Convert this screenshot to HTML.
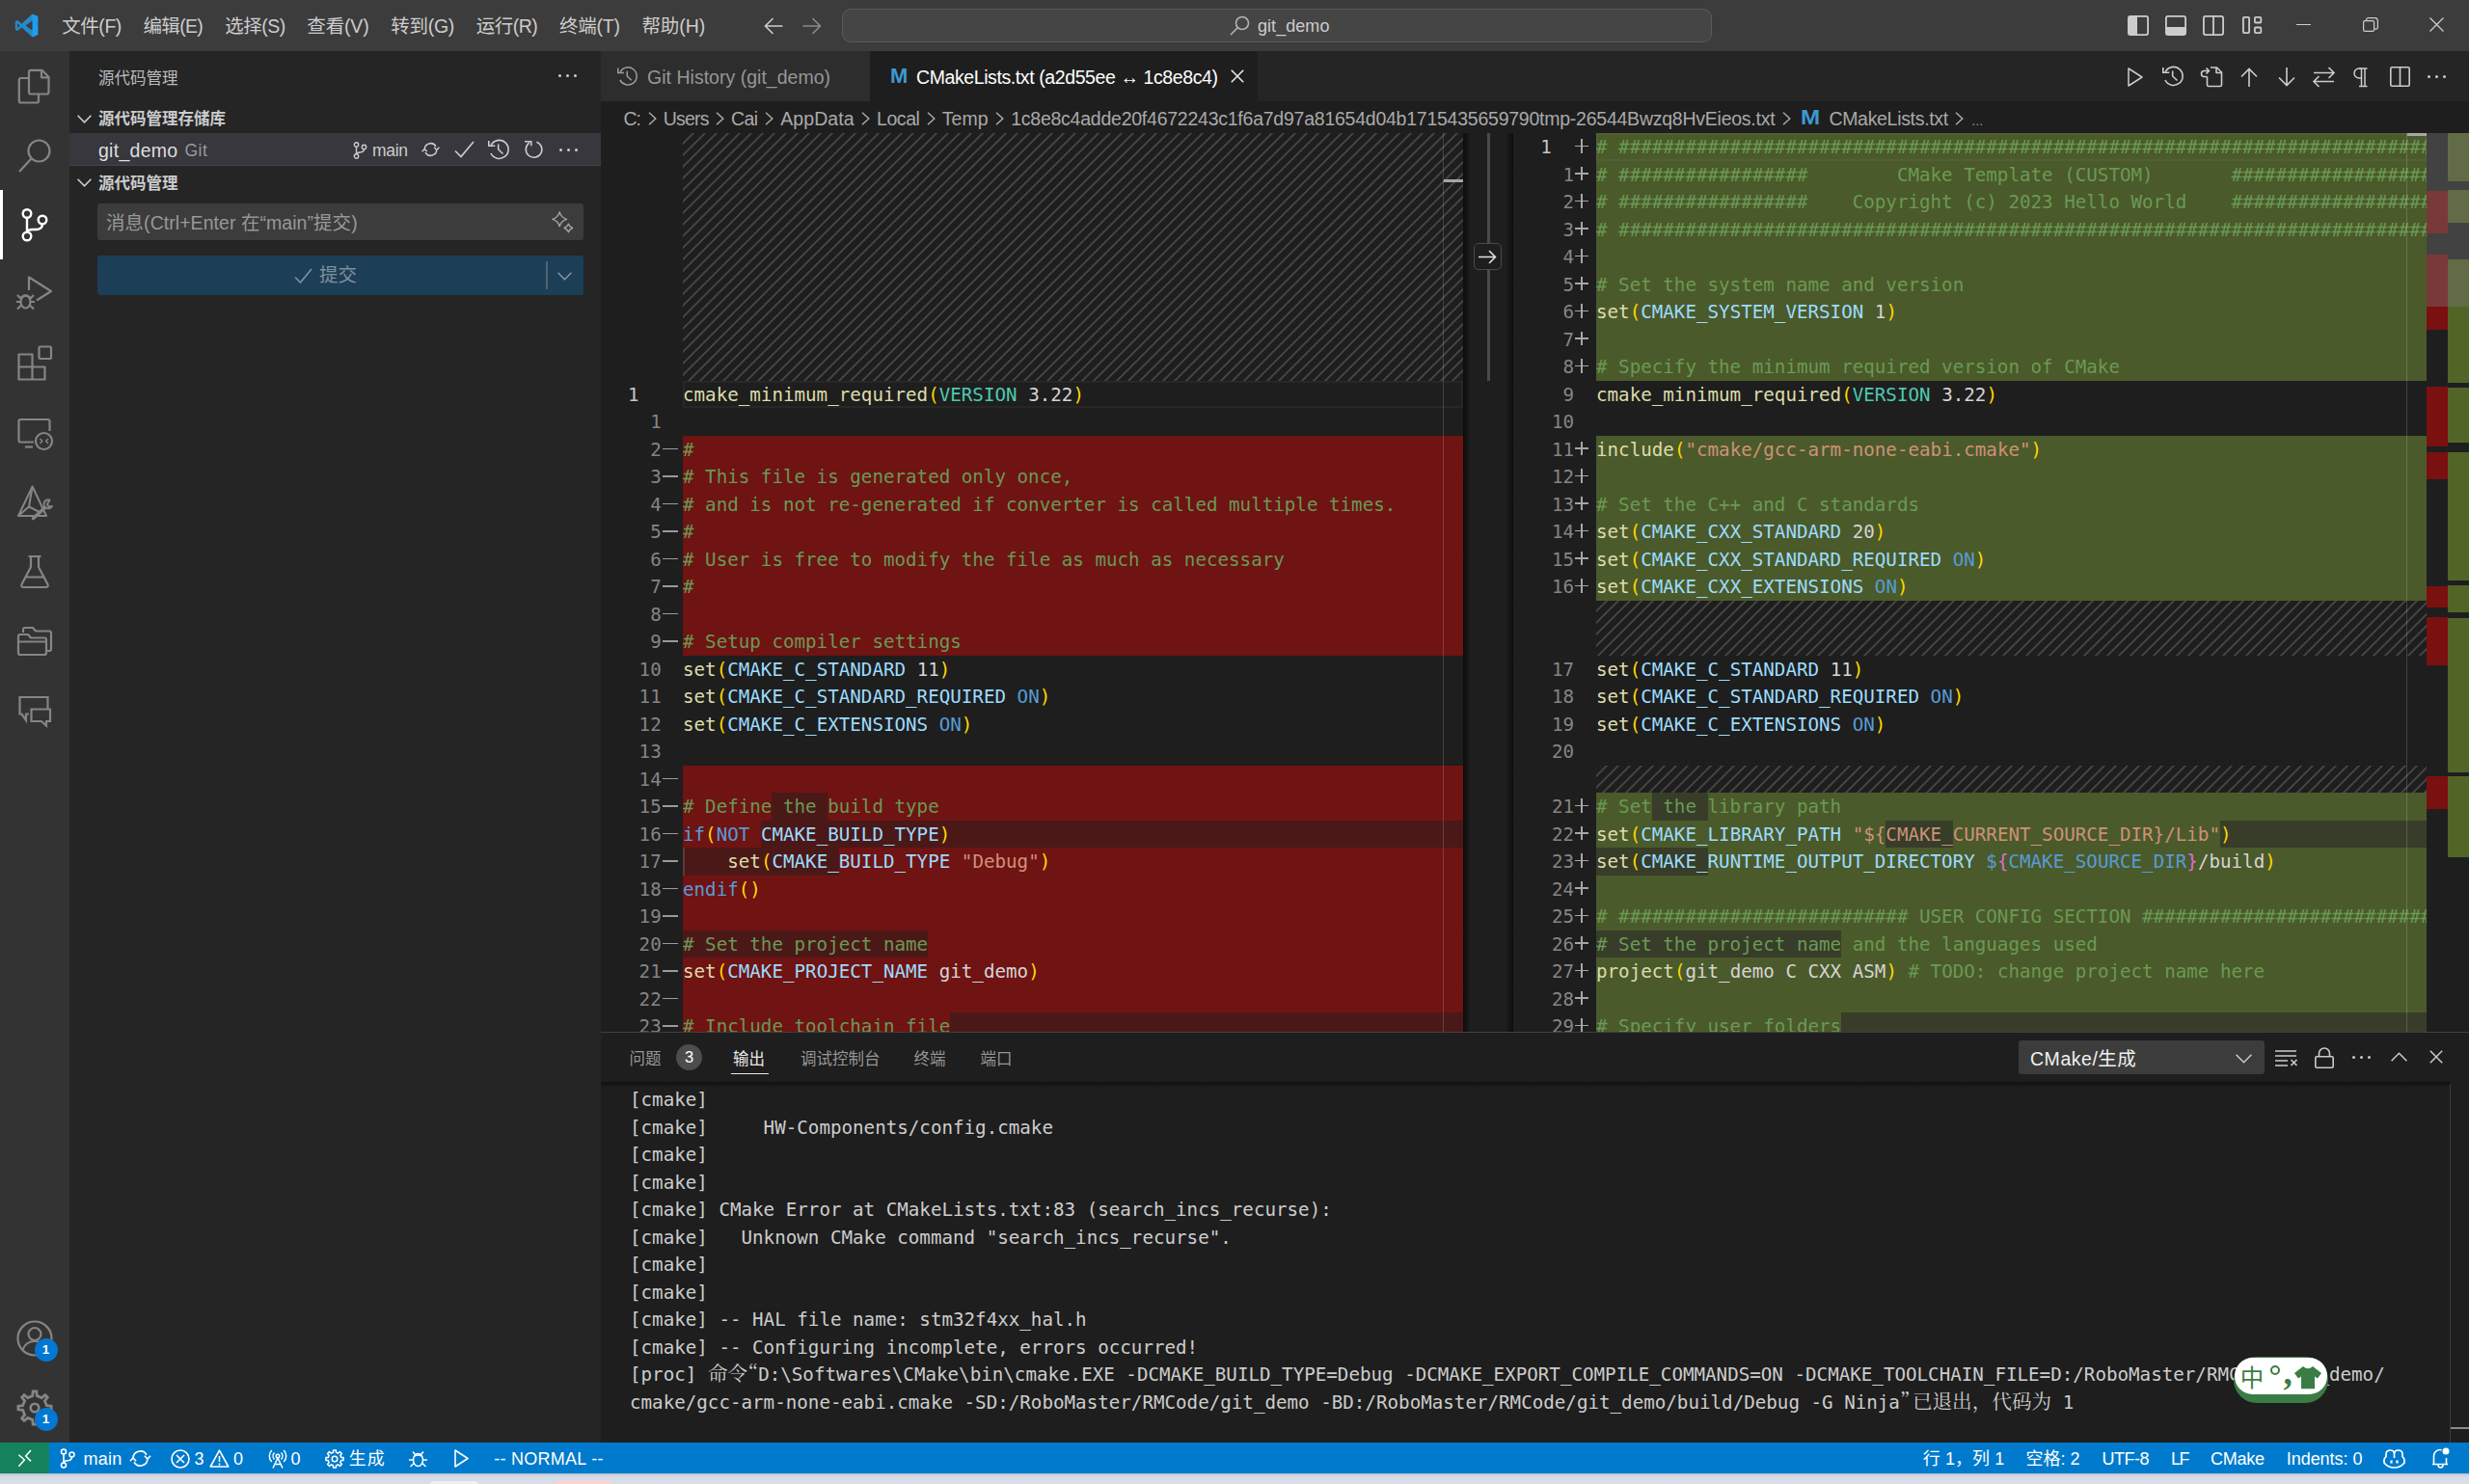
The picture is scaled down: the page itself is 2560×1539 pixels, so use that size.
<!DOCTYPE html>
<html lang="zh-CN"><head><meta charset="utf-8"><title>git_demo</title>
<style>
*{box-sizing:border-box;margin:0;padding:0}
html,body{width:2560px;height:1539px;overflow:hidden;background:#1e1e1e}
body{position:relative;font-family:"Liberation Sans","Noto Sans CJK SC",sans-serif;color:#ccc;font-size:19.5px}
.abs,#title,#act,#side,#tabs,#crumbs,.ed,#ruler,#panel,#status,#below,#gutter{position:absolute}
svg{display:block;position:absolute;overflow:visible}
/* title bar */
#title{left:0;top:0;width:2560px;height:52.5px;background:#3c3c3c}
#title .mi{position:absolute;top:1px;height:52.5px;line-height:52.5px;font-size:19.5px;color:#ccc;white-space:pre}
#cmd{position:absolute;left:873px;top:9px;width:902px;height:35px;border:1px solid #5a5a5a;border-radius:9px;background:#454545}
#cmd span{position:absolute;left:430px;top:0;line-height:35px;font-size:18px;color:#ccc}
/* activity bar */
#act{left:0;top:52.5px;width:72px;height:1443.5px;background:#333}
#act .on{position:absolute;left:0;top:144px;width:3px;height:72px;background:#fff}
.badge{position:absolute;width:24px;height:24px;border-radius:12px;background:#0078d4;color:#fff;font-size:13.5px;font-weight:bold;text-align:center;line-height:24px}
/* side bar */
#side{left:72px;top:52.5px;width:551px;height:1443.5px;background:#252526}
/* editor */
.ed{top:138px;height:932px;overflow:hidden;background:#1e1e1e}
.content{position:absolute;top:0;height:932px;overflow:hidden}
.content>div{position:absolute}
.ln{left:0;height:28.5px;font:19.2px/30.4px "DejaVu Sans Mono","Liberation Mono",monospace;white-space:pre;color:#d4d4d4}
.mono{font-family:"DejaVu Sans Mono","Liberation Mono",monospace}
.f{color:#dcdcaa}.p{color:#ffd700}.v{color:#9cdcfe}.t{color:#4ec9b0}.n{color:#d4d4d4}.k{color:#569cd6}.s{color:#ce9178}.c{color:#6a9955}.q{color:#da70d6}
.dl{left:0;width:100%;height:28.5px;background:#4b1818}
.dc{height:28.5px;background:#6f1313}
.il{left:0;width:100%;height:28.5px;background:#373d29}
.ic{height:28.5px;background:#4b5a2a}
.cur{left:0;width:100%;height:28.5px;border:2px solid rgba(255,255,255,.045)}
.hatch{left:0;width:100%;background-image:linear-gradient(-45deg,#414141 12.5%,transparent 12.5%,transparent 50%,#414141 50%,#414141 62.5%,transparent 62.5%,transparent 100%);background-size:12px 12px}
.gut{position:absolute;left:0;top:0;height:932px}
.gL{width:85px}.gR{width:86px}
.num{position:absolute;height:28.5px;font:19.2px/30.4px "DejaVu Sans Mono","Liberation Mono",monospace;color:#858585;text-align:right;white-space:pre}
.gL .num{left:0;width:62.7px}
.gR .num{left:0;width:63px}
.num.act{color:#c6c6c6}
.gL .num.act{width:39.5px}
.gR .num.act{width:39.7px}
.minus{position:absolute;left:63.5px;width:16px;height:1.6px;background:#9a9a9a}
.plus{position:absolute;left:63.8px;width:14.4px;height:28.5px}
.plus i{position:absolute;left:0;top:12.8px;width:14.4px;height:1.6px;background:#a6a6a6}
.plus b{position:absolute;left:6.4px;top:6.3px;width:1.6px;height:14.6px;background:#a6a6a6}
.vsb{position:absolute;top:0;width:1px;height:932px;background:rgba(255,255,255,.17)}
.vmark{position:absolute;width:20px;height:3px;background:#a6a6a6}
.hsb{position:absolute;left:86px;bottom:0;width:640px;height:20px;background:rgba(121,121,121,.0)}
.dots{position:absolute;width:19px;height:3px}
.dots i{position:absolute;top:0;width:3px;height:3px;border-radius:50%;background:#ccc}
.dots i:nth-child(1){left:0}.dots i:nth-child(2){left:8px}.dots i:nth-child(3){left:16px}
.sec{position:absolute;left:30px;height:33px;line-height:36px;font-size:16.5px;font-weight:bold;color:#ccc;white-space:pre}
#tabs{left:623px;top:52.5px;width:1937px;height:52.5px;background:#252526}
.mfile{font:bold 22px/26px "Liberation Sans",sans-serif;color:#3b9ad1}
#crumbs{left:623px;top:105px;width:1937px;height:33px;background:#1e1e1e;line-height:33px;color:#a9a9a9;white-space:pre;overflow:hidden}
.bc{position:absolute;top:0;line-height:36px;white-space:pre}
.mfile2{font:bold 22px/22px "Liberation Sans",sans-serif;color:#3b9ad1;transform:scaleX(1.1);transform-origin:0 0}
#gutter{left:1517px;top:138px;width:52px;height:932px;background:#1e1e1e;overflow:hidden}
#ruler{left:2516px;top:138px;width:44px;height:932px;background:#1e1e1e;overflow:hidden}
#ruler i{position:absolute;display:block;width:22px}
#ruler .r{left:0;background:#7a1010}
#ruler .g{left:22px;background:#536526}
#panel{left:623px;top:1070px;width:1937px;height:426px;background:#1e1e1e;border-top:1px solid #414141}
.pt{position:absolute;top:0;height:53px;line-height:55px;font-size:16.5px;color:#969696;white-space:pre}
#out{position:absolute;left:30px;top:56px;font:19.2px/28.5px "DejaVu Sans Mono","Liberation Mono",monospace;color:#ccc}
#out div{height:28.5px;white-space:pre}
#out .cj{font-family:"Noto Serif CJK SC","Noto Sans CJK SC",serif;font-size:20.6px;line-height:0}
#status{left:0;top:1496px;width:2560px;height:32px;background:#007acc;color:#fff}
.si{position:absolute;top:0;line-height:34px;font-size:18px;color:#fff;white-space:pre}
#below{left:0;top:1528px;width:2560px;height:11px;background:linear-gradient(#aebdcc 0,#ccd5de 2px,#d6dce3 4px,#d9dfe6 100%);overflow:hidden}
#b9{font-size:12.5px;top:2.5px}
#m1{letter-spacing:-0.461px}
#m2{letter-spacing:-0.66px}
#m3{letter-spacing:-0.52px}
#m4{letter-spacing:-0.16px}
#m5{letter-spacing:-0.291px}
#m6{letter-spacing:-0.476px}
#m7{letter-spacing:-0.261px}
#m8{letter-spacing:-0.076px}
#cc{letter-spacing:0.055px}
#gd{letter-spacing:0.273px}
#gg{letter-spacing:0.475px}
#gm{letter-spacing:-0.309px}
#ph{letter-spacing:0.051px}
#t1{letter-spacing:0.021px}
#t2{letter-spacing:-0.404px}
#b1{letter-spacing:-1.1px}
#b2{letter-spacing:-0.764px}
#b3{letter-spacing:-0.622px}
#b4{letter-spacing:0.087px}
#b5{letter-spacing:-0.425px}
#b6{letter-spacing:0.103px}
#b7{letter-spacing:-0.241px}
#b8{letter-spacing:-0.312px}
#s1{letter-spacing:0.196px}
#s5{letter-spacing:0.9px}
#s6{letter-spacing:0.264px}
#s7{letter-spacing:0.067px}
#s8{letter-spacing:-0.023px}
#s9{letter-spacing:-0.46px}
#s10{letter-spacing:-1.458px}
#s11{letter-spacing:-0.203px}
#s12{letter-spacing:-0.026px}
#dd{letter-spacing:0.527px}

</style></head>
<body>
<!-- ===== TITLE BAR ===== -->
<div id="title">
 <svg style="left:15px;top:14px" width="25" height="25" viewBox="0 0 100 100"><path d="M74 2 30 42 12 28 3 33v34l9 5 18-14 44 40 23-10V12z" fill="#2489ca"/><path d="M74 2 97 12v76L74 98z" fill="#1f9cf0"/><path d="M74 30 46 50l28 20zM12 40v20l10-10z" fill="#3c3c3c"/></svg>
 <span class="mi" id="m1" style="left:64.3px">文件(F)</span>
 <span class="mi" id="m2" style="left:148.5px">编辑(E)</span>
 <span class="mi" id="m3" style="left:233.3px">选择(S)</span>
 <span class="mi" id="m4" style="left:318.3px">查看(V)</span>
 <span class="mi" id="m5" style="left:405.3px">转到(G)</span>
 <span class="mi" id="m6" style="left:493.7px">运行(R)</span>
 <span class="mi" id="m7" style="left:580.1px">终端(T)</span>
 <span class="mi" id="m8" style="left:665.4px">帮助(H)</span>
 <svg style="left:792px;top:17px" width="20" height="20" viewBox="0 0 20 20" fill="none" stroke="#ccc" stroke-width="1.6"><path d="M19.5 10H1.5M9.5 2l-8 8 8 8"/></svg>
 <svg style="left:832px;top:17px" width="20" height="20" viewBox="0 0 20 20" fill="none" stroke="#8a8a8a" stroke-width="1.6"><path d="M.5 10h18M10.5 2l8 8-8 8"/></svg>
 <div id="cmd">
  <svg style="left:401px;top:6px" width="21" height="21" viewBox="0 0 21 21" fill="none" stroke="#b4b4b4" stroke-width="1.6"><circle cx="13" cy="8" r="6.5"/><path d="M8.5 12.5 1 20"/></svg>
  <span id="cc">git_demo</span>
 </div>
 <!-- layout icons -->
 <svg style="left:2206px;top:15.5px" width="22" height="21" viewBox="0 0 22 21"><rect x=".9" y=".9" width="20.2" height="19.2" rx="2" fill="none" stroke="#ccc" stroke-width="1.8"/><rect x="1" y="1" width="9" height="19" fill="#ccc"/></svg>
 <svg style="left:2245px;top:15.5px" width="22" height="21" viewBox="0 0 22 21"><rect x=".9" y=".9" width="20.2" height="19.2" rx="2" fill="none" stroke="#ccc" stroke-width="1.8"/><rect x="1" y="12" width="20" height="8" fill="#ccc"/></svg>
 <svg style="left:2284px;top:15.5px" width="22" height="21" viewBox="0 0 22 21"><rect x=".9" y=".9" width="20.2" height="19.2" rx="2" fill="none" stroke="#ccc" stroke-width="1.8"/><path d="M11 1v19" stroke="#ccc" stroke-width="1.8"/></svg>
 <svg style="left:2324.5px;top:17px" width="21" height="18" viewBox="0 0 21 18" fill="none" stroke="#ccc" stroke-width="1.8"><rect x=".9" y=".9" width="6.2" height="16.2" rx="1"/><rect x="12.9" y=".9" width="6.4" height="5.6" rx="1"/><rect x="12.9" y="11.5" width="6.4" height="5.6" rx="1"/></svg>
 <!-- window controls -->
 <div class="abs" style="left:2381px;top:25px;width:15px;height:1.4px;background:#ccc"></div>
 <svg style="left:2450px;top:18px" width="16" height="15" viewBox="0 0 16 15" fill="none" stroke="#ccc" stroke-width="1.2"><rect x=".6" y="3.6" width="11" height="10.8" rx="1.5"/><path d="M3.5 3.5V2.4Q3.6.7 5.5.6h7.2q2.6.2 2.7 2.8v7q-.1 1.7-1.8 1.8h-1.8"/></svg>
 <svg style="left:2519px;top:18px" width="15" height="15" viewBox="0 0 15 15" fill="none" stroke="#ccc" stroke-width="1.3"><path d="M.5.5l14 14M14.5.5l-14 14"/></svg>
</div>

<!-- ===== ACTIVITY BAR ===== -->
<div id="act">
 <div class="on"></div>
 <!-- explorer (files) center y=36 -->
 <svg style="left:18px;top:18px" width="36" height="38" viewBox="0 0 36 38" fill="none" stroke="#858585" stroke-width="2.2" stroke-linejoin="round"><path d="M14 1.8H25.5L32.5 8.8V24.5q0 2-2 2H14q-2 0-2-2V3.8q0-2 2-2zM25 2V9.3H32"/><path d="M11.5 10H3.8q-2 0-2 2V33.5q0 2 2 2H20q2 0 2-2V27"/></svg>
 <!-- search -->
 <svg style="left:18px;top:90px" width="36" height="36" viewBox="0 0 36 36" fill="none" stroke="#858585" stroke-width="2.2"><circle cx="22.5" cy="13.5" r="11"/><path d="M14.5 21.5 2 35"/></svg>
 <!-- scm (active) -->
 <svg style="left:18px;top:162px" width="36" height="36" viewBox="0 0 36 36" fill="none" stroke="#fff" stroke-width="2.4"><circle cx="10" cy="6.5" r="4.3"/><circle cx="10" cy="30" r="4.3"/><circle cx="26" cy="13" r="4.3"/><path d="M10 11v14.5M26 17.5q0 5-6 5.5h-4q-6 0-6 3"/></svg>
 <!-- run & debug -->
 <svg style="left:16px;top:232.2px" width="40" height="38" viewBox="0 0 40 38" fill="none" stroke="#858585" stroke-width="2.2" stroke-linejoin="round"><path d="M14 16V2.5l23 14.5L22 26.5"/><ellipse cx="10.5" cy="28" rx="5" ry="6.5"/><path d="M5.5 24.5 2 21M15.5 24.5 19 21M5.5 28H1M15.5 28H20M5.5 32 2 35.5M15.5 32 19 35.5M6 23.5q4.5-4 9 0"/></svg>
 <!-- extensions -->
 <svg style="left:18px;top:305.2px" width="36" height="36" viewBox="0 0 36 36" fill="none" stroke="#858585" stroke-width="2.2" stroke-linejoin="round"><path d="M1.5 9.5h14v26h-14zM1.5 22.5h27v13h-27M15.5 22.5h13"/><rect x="22.5" y="1.5" width="12.5" height="12.5" rx="1"/></svg>
 <!-- remote explorer -->
 <svg style="left:18px;top:379px" width="38" height="36" viewBox="0 0 38 36" fill="none" stroke="#858585" stroke-width="2.2" stroke-linejoin="round"><path d="M17 26.5H3.5q-2 0-2-2V5q0-2 2-2h28q2 0 2 2v10"/><path d="M8 31.5h8"/><circle cx="27.5" cy="25.5" r="8.5"/><path d="M23.5 23l2.3 2.5-2.3 2.5M32 23l-2.3 2.5 2.3 2.5" stroke-width="1.5"/></svg>
 <!-- cmake tools -->
 <svg style="left:17px;top:449px" width="40" height="38" viewBox="0 0 40 38" fill="none" stroke="#858585" stroke-width="2" stroke-linejoin="round"><path d="M16.6 2.5 2 33H31L16.6 2.5zM16.6 2.5 13 23.5 2 33M13 23.5l12 6"/><path d="M34.5 16.5a4.5 4.5 0 1 0 2.5 6.5l-3.5.5-1.5-2.5 2.5-4.5z" fill="#333"/><path d="M29.5 24.5 17.5 35.5" stroke-width="3.6" stroke-linecap="round"/></svg>
 <!-- testing (beaker) -->
 <svg style="left:19px;top:522px" width="34" height="36" viewBox="0 0 34 36" fill="none" stroke="#858585" stroke-width="2.2" stroke-linejoin="round"><path d="M10.5 2h13M13 2v11L3.5 31q-1 3 2 3h23q3 0 2-3L21 13V2M7.5 23.5h19"/></svg>
 <!-- project manager (folders) -->
 <svg style="left:17px;top:596px" width="38" height="32" viewBox="0 0 38 32" fill="none" stroke="#858585" stroke-width="2.2" stroke-linejoin="round"><path d="M7 7V4q0-2 2-2h8l3 3.5h14q2 0 2 2V24q0 2-2 2h-3"/><path d="M2 11q0-2 2-2h8l3 3.5h14q2 0 2 2V28q0 2-2 2H4q-2 0-2-2zM2 16.5h29"/></svg>
 <!-- chat -->
 <svg style="left:18px;top:668px" width="37" height="34" viewBox="0 0 37 34" fill="none" stroke="#858585" stroke-width="2.2" stroke-linejoin="miter"><path d="M12 19.5H9v6.5l-4.5-6.5H2.5V2h29v12"/><path d="M14.5 14.5h19.5v12.5h-4v4.5l-5-4.5H14.5z"/></svg>
 <!-- account -->
 <svg style="left:17px;top:1316.5px" width="38" height="38" viewBox="0 0 38 38" fill="none" stroke="#858585" stroke-width="2.2"><circle cx="19" cy="19" r="17.5"/><circle cx="19" cy="14.5" r="6.5"/><path d="M6.5 31q3-9 12.5-9t12.5 9"/></svg>
 <div class="badge" style="left:35.5px;top:1335px">1</div>
 <!-- settings gear -->
 <svg style="left:17px;top:1388.5px" width="38" height="38" viewBox="0 0 38 38" fill="none" stroke="#858585" stroke-width="2.8" stroke-linejoin="miter"><path d="M16.7 6.6 17.2 1.9 20.8 1.9 21.3 6.6 26.2 8.6 29.9 5.7 32.3 8.1 29.4 11.8 31.4 16.7 36.1 17.2 36.1 20.8 31.4 21.3 29.4 26.2 32.3 29.9 29.9 32.3 26.2 29.4 21.3 31.4 20.8 36.1 17.2 36.1 16.7 31.4 11.8 29.4 8.1 32.3 5.7 29.9 8.6 26.2 6.6 21.3 1.9 20.8 1.9 17.2 6.6 16.7 8.6 11.8 5.7 8.1 8.1 5.7 11.8 8.6z"/><circle cx="19" cy="19" r="4.3" stroke-width="2.6"/></svg>
 <div class="badge" style="left:35.5px;top:1407px">1</div>
</div>

<!-- ===== SIDE BAR ===== -->
<div id="side">
 <div class="abs" style="left:30px;top:0;height:52.5px;line-height:56px;font-size:16.5px;color:#bbb">源代码管理</div>
 <div class="dots" style="left:507px;top:24px"><i></i><i></i><i></i></div>
 <!-- section 1 -->
 <svg style="left:8px;top:66.5px" width="15" height="9" viewBox="0 0 15 9" fill="none" stroke="#ccc" stroke-width="1.6"><path d="M.6.8l6.9 7 6.9-7"/></svg>
 <div class="sec" style="top:52.5px">源代码管理存储库</div>
 <div class="abs" style="left:0;top:85.5px;width:551px;height:33.5px;background:#37373d;border-bottom:1px solid #454549"></div>
 <div class="abs" style="left:30px;top:85.5px;line-height:36px;color:#dedede;white-space:pre"><span id="gd">git_demo</span></div>
 <div class="abs" id="gg" style="left:119.5px;top:86px;line-height:35px;font-size:17.5px;color:#9a9a9a">Git</div>
 <svg style="left:294px;top:94px" width="15" height="18" viewBox="0 0 15 18" fill="none" stroke="#ccc" stroke-width="1.4"><circle cx="3.5" cy="3" r="2.2"/><circle cx="3.5" cy="15" r="2.2"/><circle cx="11.5" cy="5.5" r="2.2"/><path d="M3.5 5.2v7.6M11.5 7.7q0 3-4 3.3-4 .3-4 2"/></svg>
 <div class="abs" id="gm" style="left:314px;top:86px;line-height:35px;font-size:17.5px;color:#ccc">main</div>
 <svg style="left:364.5px;top:94.5px" width="19" height="16" viewBox="0 0 19 16" fill="none" stroke="#ccc" stroke-width="1.5"><path d="M3.2 8A6.3 6.3 0 0 1 14.96 4.85M15.8 8A6.3 6.3 0 0 1 4.04 11.15M.6 10.3 3.2 7.5l2.6 2.8M13.2 5.7l2.6 2.8 2.6-2.8"/></svg>
 <svg style="left:399px;top:93px" width="21" height="18" viewBox="0 0 21 18" fill="none" stroke="#ccc" stroke-width="1.7"><path d="M1 10.5l6 6L20 1"/></svg>
 <svg style="left:434px;top:91.5px" width="23" height="22" viewBox="0 0 23 22" fill="none" stroke="#ccc" stroke-width="1.6"><path d="M3.2 6.5A9.5 9.5 0 1 1 3 15M.8 2.1V7.3H7.3M10.7 5.4V11L15.5 15.5"/></svg>
 <svg style="left:471px;top:92.5px" width="20" height="21" viewBox="0 0 20 21" fill="none" stroke="#ccc" stroke-width="1.6"><path d="M13.4 2.2A8.3 8.3 0 1 1 5.8 3.2M1 1.7H7.75V6.3"/></svg>
 <div class="dots" style="left:508px;top:101px"><i></i><i></i><i></i></div>
 <!-- section 2 -->
 <svg style="left:8px;top:132.5px" width="15" height="9" viewBox="0 0 15 9" fill="none" stroke="#ccc" stroke-width="1.6"><path d="M.6.8l6.9 7 6.9-7"/></svg>
 <div class="sec" style="top:119px">源代码管理</div>
 <div class="abs" style="left:29px;top:158.5px;width:504px;height:38px;border-radius:3px;background:#3c3c3c"></div>
 <div class="abs" style="left:38px;top:159px;line-height:38px;color:#989898;white-space:pre"><span id="ph">消息(Ctrl+Enter 在“main”提交)</span></div>
 <svg style="left:499px;top:166px" width="24" height="23" viewBox="0 0 24 23" fill="none" stroke="#a3a3a3" stroke-width="1.4" stroke-linejoin="round"><path d="M9.2 0.9Q10.8 6.7 16.6 8.3Q10.8 9.9 9.2 15.7Q7.6 9.9 1.8 8.3Q7.6 6.7 9.2 0.9z"/><path d="M18.4 13.2Q19.5 16.4 22.7 17.5Q19.5 18.6 18.4 21.8Q17.3 18.6 14.1 17.5Q17.3 16.4 18.4 13.2z"/></svg>
 <div class="abs" style="left:29px;top:212.5px;width:504px;height:41px;border-radius:3px;background:#1c3e57"></div>
 <svg style="left:233px;top:225px" width="19" height="16" viewBox="0 0 19 16" fill="none" stroke="#7f8f9b" stroke-width="1.7"><path d="M1 9.5l5.5 5.5L18 1"/></svg>
 <div class="abs" style="left:259px;top:212.5px;line-height:41px;color:#7f8f9b">提交</div>
 <div class="abs" style="left:494px;top:218.5px;width:2px;height:29px;background:#506473"></div>
 <svg style="left:506px;top:229.5px" width="15" height="9" viewBox="0 0 15 9" fill="none" stroke="#7f8f9b" stroke-width="1.6"><path d="M.6.8l6.9 7 6.9-7"/></svg>
</div>

<!-- ===== TABS ===== -->
<div id="tabs">
 <div class="abs" style="left:0;top:0;width:279px;height:52.5px;background:#2d2d2d"></div>
 <svg style="left:17px;top:15px" width="22" height="22" viewBox="0 0 23 22" fill="none" stroke="#9b9b9b" stroke-width="1.6"><path d="M3.2 6.5A9.5 9.5 0 1 1 3 15M.8 2.1V7.3H7.3M10.7 5.4V11L15.5 15.5"/></svg>
 <div class="abs" style="left:48px;top:0;line-height:55px;color:#969696;white-space:pre"><span id="t1">Git History (git_demo)</span></div>
 <div class="abs" style="left:279px;top:0;width:402px;height:52.5px;background:#1e1e1e"></div>
 <div class="abs mfile" style="left:300px;top:13px">M</div>
 <div class="abs" style="left:327px;top:0;line-height:55px;color:#fff;white-space:pre"><span id="t2">CMakeLists.txt (a2d55ee ↔ 1c8e8c4)</span></div>
 <svg style="left:653px;top:19.5px" width="14" height="14" viewBox="0 0 14 14" fill="none" stroke="#e8e8e8" stroke-width="1.6"><path d="M.8.8l12.4 12.4M13.2.8.8 13.2"/></svg>
 <!-- editor actions -->
 <svg style="left:1583px;top:17px" width="16" height="20" viewBox="0 0 16 20" fill="none" stroke="#ccc" stroke-width="1.5" stroke-linejoin="round"><path d="M1 1v18l14-9z"/></svg>
 <svg style="left:1619px;top:15.5px" width="23" height="22" viewBox="0 0 23 22" fill="none" stroke="#ccc" stroke-width="1.6"><path d="M3.2 6.5A9.5 9.5 0 1 1 3 15M.8 2.1V7.3H7.3M10.7 5.4V11L15.5 15.5"/></svg>
 <svg style="left:1658px;top:15px" width="24" height="23" viewBox="0 0 24 23" fill="none" stroke="#ccc" stroke-width="1.6" stroke-linejoin="round"><path d="M11 2h6.5l5 5v13q0 1.5-1.5 1.5H9q-1.5 0-1.5-1.5V11.5M17 2v5.5h5.5"/><path d="M7.5 11.5H3.8Q1.5 11 1.5 8.5t2.3-3H9M6.5 2.5l3 3-3 3"/></svg>
 <svg style="left:1700px;top:17px" width="18" height="20" viewBox="0 0 18 20" fill="none" stroke="#ccc" stroke-width="1.6"><path d="M9 20V1.5M1 9.5l8-8 8 8"/></svg>
 <svg style="left:1739px;top:17px" width="18" height="20" viewBox="0 0 18 20" fill="none" stroke="#ccc" stroke-width="1.6"><path d="M9 0v18.5M1 10.5l8 8 8-8"/></svg>
 <svg style="left:1775px;top:16px" width="23" height="22" viewBox="0 0 23 22" fill="none" stroke="#ccc" stroke-width="1.6"><path d="M1 6.5h21M16.5 1l5.5 5.5-5.5 5.5M22 15.5H1M6.5 10 1 15.5 6.5 21"/></svg>
 <svg style="left:1817px;top:17px" width="15" height="20" viewBox="0 0 15 20" fill="none" stroke="#ccc" stroke-width="1.5"><path d="M8.5 19.5V1M12 19.5V1M6 19.5h8.5M14.5 1H6"/><path d="M8.5 1H6a5 5 0 0 0 0 10h2.5"/></svg>
 <svg style="left:1855px;top:16px" width="21" height="21" viewBox="0 0 21 21" fill="none" stroke="#ccc" stroke-width="1.6"><rect x=".8" y=".8" width="19.4" height="19.4" rx="1.5"/><path d="M10.5 1v19"/></svg>
 <div class="dots" style="left:1894px;top:25px"><i></i><i></i><i></i></div>
</div>

<!-- ===== BREADCRUMBS ===== -->
<div id="crumbs">
 <span class="bc" id="b1" style="left:23.6px">C:</span>
 <span class="bc" id="b2" style="left:64.7px">Users</span>
 <span class="bc" id="b3" style="left:135.0px">Cai</span>
 <span class="bc" id="b4" style="left:186.2px">AppData</span>
 <span class="bc" id="b5" style="left:286.0px">Local</span>
 <span class="bc" id="b6" style="left:353.7px">Temp</span>
 <span class="bc" id="b7" style="left:425.2px">1c8e8c4adde20f4672243c1f6a7d97a81654d04b1715435659790tmp-26544Bwzq8HvEieos.txt</span>
 <span class="bc" id="b8" style="left:1273.4px">CMakeLists.txt</span>
 <span class="bc" id="b9" style="left:1420.9px">…</span>
 <svg style="left:48.5px;top:10.5px" width="9" height="14" viewBox="0 0 9 14" fill="none" stroke="#a9a9a9" stroke-width="1.5"><path d="M1 .8 7.8 7 1 13.2"/></svg>
 <svg style="left:119.4px;top:10.5px" width="9" height="14" viewBox="0 0 9 14" fill="none" stroke="#a9a9a9" stroke-width="1.5"><path d="M1 .8 7.8 7 1 13.2"/></svg>
 <svg style="left:170.0px;top:10.5px" width="9" height="14" viewBox="0 0 9 14" fill="none" stroke="#a9a9a9" stroke-width="1.5"><path d="M1 .8 7.8 7 1 13.2"/></svg>
 <svg style="left:270.3px;top:10.5px" width="9" height="14" viewBox="0 0 9 14" fill="none" stroke="#a9a9a9" stroke-width="1.5"><path d="M1 .8 7.8 7 1 13.2"/></svg>
 <svg style="left:338.1px;top:10.5px" width="9" height="14" viewBox="0 0 9 14" fill="none" stroke="#a9a9a9" stroke-width="1.5"><path d="M1 .8 7.8 7 1 13.2"/></svg>
 <svg style="left:409.0px;top:10.5px" width="9" height="14" viewBox="0 0 9 14" fill="none" stroke="#a9a9a9" stroke-width="1.5"><path d="M1 .8 7.8 7 1 13.2"/></svg>
 <svg style="left:1224.5px;top:10.5px" width="9" height="14" viewBox="0 0 9 14" fill="none" stroke="#a9a9a9" stroke-width="1.5"><path d="M1 .8 7.8 7 1 13.2"/></svg>
 <svg style="left:1403.5px;top:10.5px" width="9" height="14" viewBox="0 0 9 14" fill="none" stroke="#a9a9a9" stroke-width="1.5"><path d="M1 .8 7.8 7 1 13.2"/></svg>
 <div class="abs mfile2" style="left:1244px;top:6.4px">M</div>
</div>


<div id="edL" class="ed" style="left:623px;width:894px">
 <div class="content" style="left:85px;width:809px">
<div class="hatch" style="top:0.0px;height:256.5px"></div>
<div class="cur" style="top:256.5px"></div>
<div class="ln" style="top:256.5px"><span class="f">cmake_minimum_required</span><span class="p">(</span><span class="t">VERSION</span> <span class="n">3.22</span><span class="p">)</span></div>
<div class="dl" style="top:313.5px"></div>
<div class="dc" style="top:313.5px;left:0.0px;width:809.0px"></div>
<div class="ln" style="top:313.5px"><span class="c">#</span></div>
<div class="dl" style="top:342.0px"></div>
<div class="dc" style="top:342.0px;left:0.0px;width:809.0px"></div>
<div class="ln" style="top:342.0px"><span class="c"># This file is generated only once,</span></div>
<div class="dl" style="top:370.5px"></div>
<div class="dc" style="top:370.5px;left:0.0px;width:809.0px"></div>
<div class="ln" style="top:370.5px"><span class="c"># and is not re-generated if converter is called multiple times.</span></div>
<div class="dl" style="top:399.0px"></div>
<div class="dc" style="top:399.0px;left:0.0px;width:809.0px"></div>
<div class="ln" style="top:399.0px"><span class="c">#</span></div>
<div class="dl" style="top:427.5px"></div>
<div class="dc" style="top:427.5px;left:0.0px;width:809.0px"></div>
<div class="ln" style="top:427.5px"><span class="c"># User is free to modify the file as much as necessary</span></div>
<div class="dl" style="top:456.0px"></div>
<div class="dc" style="top:456.0px;left:0.0px;width:809.0px"></div>
<div class="ln" style="top:456.0px"><span class="c">#</span></div>
<div class="dl" style="top:484.5px"></div>
<div class="dc" style="top:484.5px;left:0.0px;width:809.0px"></div>
<div class="dl" style="top:513.0px"></div>
<div class="dc" style="top:513.0px;left:0.0px;width:809.0px"></div>
<div class="ln" style="top:513.0px"><span class="c"># Setup compiler settings</span></div>
<div class="ln" style="top:541.5px"><span class="f">set</span><span class="p">(</span><span class="v">CMAKE_C_STANDARD</span> <span class="n">11</span><span class="p">)</span></div>
<div class="ln" style="top:570.0px"><span class="f">set</span><span class="p">(</span><span class="v">CMAKE_C_STANDARD_REQUIRED</span> <span class="k">ON</span><span class="p">)</span></div>
<div class="ln" style="top:598.5px"><span class="f">set</span><span class="p">(</span><span class="v">CMAKE_C_EXTENSIONS</span> <span class="k">ON</span><span class="p">)</span></div>
<div class="dl" style="top:655.5px"></div>
<div class="dc" style="top:655.5px;left:0.0px;width:809.0px"></div>
<div class="dl" style="top:684.0px"></div>
<div class="dc" style="top:684.0px;left:0.0px;width:92.4px"></div>
<div class="dc" style="top:684.0px;left:150.2px;width:658.8px"></div>
<div class="ln" style="top:684.0px"><span class="c"># Define the build type</span></div>
<div class="dl" style="top:712.5px"></div>
<div class="dc" style="top:712.5px;left:0.0px;width:80.9px"></div>
<div class="ln" style="top:712.5px"><span class="k">if</span><span class="p">(</span><span class="k">NOT</span> <span class="v">CMAKE_BUILD_TYPE</span><span class="p">)</span></div>
<div class="dl" style="top:741.0px"></div>
<div class="dc" style="top:741.0px;left:161.7px;width:647.3px"></div>
<div class="ln" style="top:741.0px">    <span class="f">set</span><span class="p">(</span><span class="v">CMAKE_BUILD_TYPE</span> <span class="s">"Debug"</span><span class="p">)</span></div>
<div class="dl" style="top:769.5px"></div>
<div class="dc" style="top:769.5px;left:0.0px;width:809.0px"></div>
<div class="ln" style="top:769.5px"><span class="k">endif</span><span class="p">()</span></div>
<div class="dl" style="top:798.0px"></div>
<div class="dc" style="top:798.0px;left:0.0px;width:809.0px"></div>
<div class="dl" style="top:826.5px"></div>
<div class="dc" style="top:826.5px;left:254.1px;width:554.9px"></div>
<div class="ln" style="top:826.5px"><span class="c"># Set the project name</span></div>
<div class="dl" style="top:855.0px"></div>
<div class="dc" style="top:855.0px;left:0.0px;width:809.0px"></div>
<div class="ln" style="top:855.0px"><span class="f">set</span><span class="p">(</span><span class="v">CMAKE_PROJECT_NAME</span> <span class="n">git_demo</span><span class="p">)</span></div>
<div class="dl" style="top:883.5px"></div>
<div class="dc" style="top:883.5px;left:0.0px;width:809.0px"></div>
<div class="dl" style="top:912.0px"></div>
<div class="dc" style="top:912.0px;left:0.0px;width:277.2px"></div>
<div class="ln" style="top:912.0px"><span class="c"># Include toolchain file</span></div>
<div style="left:0;top:741px;width:1.5px;height:28.5px;background:rgba(255,255,255,.13)"></div>
 </div>
 <div class="gut gL">
<div class="num act" style="top:256.5px">1</div>
<div class="num" style="top:285.0px">1</div>
<div class="num" style="top:313.5px">2</div>
<div class="minus" style="top:326.5px"></div>
<div class="num" style="top:342.0px">3</div>
<div class="minus" style="top:355.0px"></div>
<div class="num" style="top:370.5px">4</div>
<div class="minus" style="top:383.5px"></div>
<div class="num" style="top:399.0px">5</div>
<div class="minus" style="top:412.0px"></div>
<div class="num" style="top:427.5px">6</div>
<div class="minus" style="top:440.5px"></div>
<div class="num" style="top:456.0px">7</div>
<div class="minus" style="top:469.0px"></div>
<div class="num" style="top:484.5px">8</div>
<div class="minus" style="top:497.5px"></div>
<div class="num" style="top:513.0px">9</div>
<div class="minus" style="top:526.0px"></div>
<div class="num" style="top:541.5px">10</div>
<div class="num" style="top:570.0px">11</div>
<div class="num" style="top:598.5px">12</div>
<div class="num" style="top:627.0px">13</div>
<div class="num" style="top:655.5px">14</div>
<div class="minus" style="top:668.5px"></div>
<div class="num" style="top:684.0px">15</div>
<div class="minus" style="top:697.0px"></div>
<div class="num" style="top:712.5px">16</div>
<div class="minus" style="top:725.5px"></div>
<div class="num" style="top:741.0px">17</div>
<div class="minus" style="top:754.0px"></div>
<div class="num" style="top:769.5px">18</div>
<div class="minus" style="top:782.5px"></div>
<div class="num" style="top:798.0px">19</div>
<div class="minus" style="top:811.0px"></div>
<div class="num" style="top:826.5px">20</div>
<div class="minus" style="top:839.5px"></div>
<div class="num" style="top:855.0px">21</div>
<div class="minus" style="top:868.0px"></div>
<div class="num" style="top:883.5px">22</div>
<div class="minus" style="top:896.5px"></div>
<div class="num" style="top:912.0px">23</div>
<div class="minus" style="top:925.0px"></div>
 </div>
 <div class="vsb" style="left:873px"></div>
 <div class="vmark" style="left:874px;top:48px"></div>
</div>
<div id="edR" class="ed" style="left:1569px;width:947px">
 <div class="content" style="left:86px;width:861px">
<div class="hatch" style="top:484.5px;height:57.0px"></div>
<div class="hatch" style="top:655.5px;height:28.5px"></div>
<div class="il" style="top:0.0px"></div>
<div class="ic" style="top:0.0px;left:0.0px;width:861.0px"></div>
<div class="cur" style="top:0.0px"></div>
<div class="ln" style="top:0.0px"><span class="c"># ####################################################################################################</span></div>
<div class="il" style="top:28.5px"></div>
<div class="ic" style="top:28.5px;left:0.0px;width:861.0px"></div>
<div class="ln" style="top:28.5px"><span class="c"># #################        CMake Template (CUSTOM)       ########################################</span></div>
<div class="il" style="top:57.0px"></div>
<div class="ic" style="top:57.0px;left:0.0px;width:861.0px"></div>
<div class="ln" style="top:57.0px"><span class="c"># #################    Copyright (c) 2023 Hello World    ########################################</span></div>
<div class="il" style="top:85.5px"></div>
<div class="ic" style="top:85.5px;left:0.0px;width:861.0px"></div>
<div class="ln" style="top:85.5px"><span class="c"># ####################################################################################################</span></div>
<div class="il" style="top:114.0px"></div>
<div class="ic" style="top:114.0px;left:0.0px;width:861.0px"></div>
<div class="il" style="top:142.5px"></div>
<div class="ic" style="top:142.5px;left:0.0px;width:861.0px"></div>
<div class="ln" style="top:142.5px"><span class="c"># Set the system name and version</span></div>
<div class="il" style="top:171.0px"></div>
<div class="ic" style="top:171.0px;left:0.0px;width:861.0px"></div>
<div class="ln" style="top:171.0px"><span class="f">set</span><span class="p">(</span><span class="v">CMAKE_SYSTEM_VERSION</span> <span class="n">1</span><span class="p">)</span></div>
<div class="il" style="top:199.5px"></div>
<div class="ic" style="top:199.5px;left:0.0px;width:861.0px"></div>
<div class="il" style="top:228.0px"></div>
<div class="ic" style="top:228.0px;left:0.0px;width:861.0px"></div>
<div class="ln" style="top:228.0px"><span class="c"># Specify the minimum required version of CMake</span></div>
<div class="ln" style="top:256.5px"><span class="f">cmake_minimum_required</span><span class="p">(</span><span class="t">VERSION</span> <span class="n">3.22</span><span class="p">)</span></div>
<div class="il" style="top:313.5px"></div>
<div class="ic" style="top:313.5px;left:0.0px;width:861.0px"></div>
<div class="ln" style="top:313.5px"><span class="f">include</span><span class="p">(</span><span class="s">"cmake/gcc-arm-none-eabi.cmake"</span><span class="p">)</span></div>
<div class="il" style="top:342.0px"></div>
<div class="ic" style="top:342.0px;left:0.0px;width:861.0px"></div>
<div class="il" style="top:370.5px"></div>
<div class="ic" style="top:370.5px;left:0.0px;width:861.0px"></div>
<div class="ln" style="top:370.5px"><span class="c"># Set the C++ and C standards</span></div>
<div class="il" style="top:399.0px"></div>
<div class="ic" style="top:399.0px;left:0.0px;width:861.0px"></div>
<div class="ln" style="top:399.0px"><span class="f">set</span><span class="p">(</span><span class="v">CMAKE_CXX_STANDARD</span> <span class="n">20</span><span class="p">)</span></div>
<div class="il" style="top:427.5px"></div>
<div class="ic" style="top:427.5px;left:0.0px;width:861.0px"></div>
<div class="ln" style="top:427.5px"><span class="f">set</span><span class="p">(</span><span class="v">CMAKE_CXX_STANDARD_REQUIRED</span> <span class="k">ON</span><span class="p">)</span></div>
<div class="il" style="top:456.0px"></div>
<div class="ic" style="top:456.0px;left:0.0px;width:861.0px"></div>
<div class="ln" style="top:456.0px"><span class="f">set</span><span class="p">(</span><span class="v">CMAKE_CXX_EXTENSIONS</span> <span class="k">ON</span><span class="p">)</span></div>
<div class="ln" style="top:541.5px"><span class="f">set</span><span class="p">(</span><span class="v">CMAKE_C_STANDARD</span> <span class="n">11</span><span class="p">)</span></div>
<div class="ln" style="top:570.0px"><span class="f">set</span><span class="p">(</span><span class="v">CMAKE_C_STANDARD_REQUIRED</span> <span class="k">ON</span><span class="p">)</span></div>
<div class="ln" style="top:598.5px"><span class="f">set</span><span class="p">(</span><span class="v">CMAKE_C_EXTENSIONS</span> <span class="k">ON</span><span class="p">)</span></div>
<div class="il" style="top:684.0px"></div>
<div class="ic" style="top:684.0px;left:0.0px;width:57.8px"></div>
<div class="ic" style="top:684.0px;left:115.5px;width:745.5px"></div>
<div class="ln" style="top:684.0px"><span class="c"># Set the library path</span></div>
<div class="il" style="top:712.5px"></div>
<div class="ic" style="top:712.5px;left:0.0px;width:300.4px"></div>
<div class="ic" style="top:712.5px;left:369.7px;width:277.2px"></div>
<div class="ln" style="top:712.5px"><span class="f">set</span><span class="p">(</span><span class="v">CMAKE_LIBRARY_PATH</span> <span class="s">"${CMAKE_CURRENT_SOURCE_DIR}/Lib"</span><span class="p">)</span></div>
<div class="il" style="top:741.0px"></div>
<div class="ic" style="top:741.0px;left:115.5px;width:745.5px"></div>
<div class="ln" style="top:741.0px"><span class="f">set</span><span class="p">(</span><span class="v">CMAKE_RUNTIME_OUTPUT_DIRECTORY</span> <span class="k">$</span><span class="q">{</span><span class="k">CMAKE_SOURCE_DIR</span><span class="q">}</span><span class="n">/build</span><span class="p">)</span></div>
<div class="il" style="top:769.5px"></div>
<div class="ic" style="top:769.5px;left:0.0px;width:861.0px"></div>
<div class="il" style="top:798.0px"></div>
<div class="ic" style="top:798.0px;left:0.0px;width:861.0px"></div>
<div class="ln" style="top:798.0px"><span class="c"># ########################## USER CONFIG SECTION ########################################</span></div>
<div class="il" style="top:826.5px"></div>
<div class="ic" style="top:826.5px;left:254.1px;width:606.9px"></div>
<div class="ln" style="top:826.5px"><span class="c"># Set the project name and the languages used</span></div>
<div class="il" style="top:855.0px"></div>
<div class="ic" style="top:855.0px;left:0.0px;width:861.0px"></div>
<div class="ln" style="top:855.0px"><span class="f">project</span><span class="p">(</span><span class="n">git_demo C CXX ASM</span><span class="p">)</span> <span class="c"># TODO: change project name here</span></div>
<div class="il" style="top:883.5px"></div>
<div class="ic" style="top:883.5px;left:0.0px;width:861.0px"></div>
<div class="il" style="top:912.0px"></div>
<div class="ic" style="top:912.0px;left:0.0px;width:254.1px"></div>
<div class="ln" style="top:912.0px"><span class="c"># Specify user folders</span></div>
 </div>
 <div class="gut gR">
<div class="num act" style="top:0.0px">1</div>
<div class="plus" style="top:0.0px"><i></i><b></b></div>
<div class="num" style="top:28.5px">1</div>
<div class="plus" style="top:28.5px"><i></i><b></b></div>
<div class="num" style="top:57.0px">2</div>
<div class="plus" style="top:57.0px"><i></i><b></b></div>
<div class="num" style="top:85.5px">3</div>
<div class="plus" style="top:85.5px"><i></i><b></b></div>
<div class="num" style="top:114.0px">4</div>
<div class="plus" style="top:114.0px"><i></i><b></b></div>
<div class="num" style="top:142.5px">5</div>
<div class="plus" style="top:142.5px"><i></i><b></b></div>
<div class="num" style="top:171.0px">6</div>
<div class="plus" style="top:171.0px"><i></i><b></b></div>
<div class="num" style="top:199.5px">7</div>
<div class="plus" style="top:199.5px"><i></i><b></b></div>
<div class="num" style="top:228.0px">8</div>
<div class="plus" style="top:228.0px"><i></i><b></b></div>
<div class="num" style="top:256.5px">9</div>
<div class="num" style="top:285.0px">10</div>
<div class="num" style="top:313.5px">11</div>
<div class="plus" style="top:313.5px"><i></i><b></b></div>
<div class="num" style="top:342.0px">12</div>
<div class="plus" style="top:342.0px"><i></i><b></b></div>
<div class="num" style="top:370.5px">13</div>
<div class="plus" style="top:370.5px"><i></i><b></b></div>
<div class="num" style="top:399.0px">14</div>
<div class="plus" style="top:399.0px"><i></i><b></b></div>
<div class="num" style="top:427.5px">15</div>
<div class="plus" style="top:427.5px"><i></i><b></b></div>
<div class="num" style="top:456.0px">16</div>
<div class="plus" style="top:456.0px"><i></i><b></b></div>
<div class="num" style="top:541.5px">17</div>
<div class="num" style="top:570.0px">18</div>
<div class="num" style="top:598.5px">19</div>
<div class="num" style="top:627.0px">20</div>
<div class="num" style="top:684.0px">21</div>
<div class="plus" style="top:684.0px"><i></i><b></b></div>
<div class="num" style="top:712.5px">22</div>
<div class="plus" style="top:712.5px"><i></i><b></b></div>
<div class="num" style="top:741.0px">23</div>
<div class="plus" style="top:741.0px"><i></i><b></b></div>
<div class="num" style="top:769.5px">24</div>
<div class="plus" style="top:769.5px"><i></i><b></b></div>
<div class="num" style="top:798.0px">25</div>
<div class="plus" style="top:798.0px"><i></i><b></b></div>
<div class="num" style="top:826.5px">26</div>
<div class="plus" style="top:826.5px"><i></i><b></b></div>
<div class="num" style="top:855.0px">27</div>
<div class="plus" style="top:855.0px"><i></i><b></b></div>
<div class="num" style="top:883.5px">28</div>
<div class="plus" style="top:883.5px"><i></i><b></b></div>
<div class="num" style="top:912.0px">29</div>
<div class="plus" style="top:912.0px"><i></i><b></b></div>
 </div>
 <div class="vsb" style="left:926px"></div>
 <div class="vmark" style="left:927px;top:0px"></div>
 <div class="hsb"></div>
</div>


<!-- gutter between editors -->
<div id="gutter">
 <div class="abs" style="left:0;top:0;width:8px;height:932px;background:linear-gradient(90deg,rgba(0,0,0,.6),rgba(0,0,0,0))"></div>
 <div class="abs" style="left:44px;top:0;width:8px;height:932px;background:linear-gradient(90deg,rgba(0,0,0,0),rgba(0,0,0,.6))"></div>
 <div class="abs" style="left:25px;top:0;width:3px;height:257px;background:#4b4b4b"></div>
 <div class="abs" style="left:11px;top:114px;width:29px;height:28px;border:1px solid #4a4a4a;border-radius:5px;background:#1e1e1e"></div>
 <svg style="left:16px;top:120.5px" width="19" height="15" viewBox="0 0 19 15" fill="none" stroke="#e4e4e4" stroke-width="1.5"><path d="M0 7.5h17.5M11 1l6.5 6.5L11 14"/></svg>
</div>

<!-- ===== OVERVIEW RULER ===== -->
<div id="ruler">
 <!-- red (left col) -->
 <i class="r" style="top:60px;height:44px"></i>
 <i class="r" style="top:126px;height:78px"></i>
 <i class="r" style="top:263px;height:62px"></i>
 <i class="r" style="top:330.5px;height:28px"></i>
 <i class="r" style="top:469.5px;height:22px"></i>
 <i class="r" style="top:501.5px;height:50px"></i>
 <i class="r" style="top:667px;height:33.5px"></i>
 <!-- green (right col) -->
 <i class="g" style="top:0;height:50px"></i>
 <i class="g" style="top:59px;height:33.5px"></i>
 <i class="g" style="top:131px;height:128px"></i>
 <i class="g" style="top:264px;height:56.5px"></i>
 <i class="g" style="top:331px;height:132.5px"></i>
 <i class="g" style="top:468.5px;height:28px"></i>
 <i class="g" style="top:503px;height:159.5px"></i>
 <i class="g" style="top:667px;height:83.5px"></i>
 <div class="abs" style="left:0;top:0;width:44px;height:180px;background:rgba(121,121,121,.4)"></div>
</div>

<!-- ===== PANEL ===== -->
<div id="panel">
 <div class="pt" style="left:29.5px">问题</div>
 <div class="abs" style="left:78px;top:12px;width:27px;height:27px;border-radius:14px;background:#4d4d4d;color:#fff;font-size:16.5px;line-height:27px;text-align:center">3</div>
 <div class="pt" style="left:137px;color:#e7e7e7">输出</div>
 <div class="abs" style="left:134.5px;top:41.5px;width:39.5px;height:1.5px;background:#e7e7e7"></div>
 <div class="pt" style="left:207px">调试控制台</div>
 <div class="pt" style="left:324.5px">终端</div>
 <div class="pt" style="left:393.5px">端口</div>
 <div class="abs" style="left:1470px;top:7.5px;width:255px;height:35px;border-radius:3px;background:#3c3c3c"></div>
 <div class="abs" style="left:1482px;top:7.5px;line-height:39px;color:#f0f0f0;white-space:pre"><span id="dd">CMake/生成</span></div>
 <svg style="left:1695px;top:22px" width="17" height="10" viewBox="0 0 17 10" fill="none" stroke="#ccc" stroke-width="1.5"><path d="M.6.8l7.9 8 7.9-8"/></svg>
 <svg style="left:1736px;top:18px" width="23" height="17" viewBox="0 0 23 17" fill="none" stroke="#ccc" stroke-width="1.6"><path d="M0 1h22M0 6h22M0 11h13M0 16h13M16.5 10l6 6M22.5 10l-6 6"/></svg>
 <svg style="left:1777px;top:15px" width="20" height="22" viewBox="0 0 20 22" fill="none" stroke="#ccc" stroke-width="1.6"><rect x=".8" y="9.8" width="18.4" height="11.4" rx="1.5"/><path d="M4.5 9.5V6.5a5.5 5.5 0 0 1 11 0v3"/></svg>
 <div class="dots" style="left:1816px;top:24.2px"><i></i><i></i><i></i></div>
 <svg style="left:1855.5px;top:19.7px" width="17" height="10" viewBox="0 0 17 10" fill="none" stroke="#ccc" stroke-width="1.5"><path d="M.6 9.2l7.9-8 7.9 8"/></svg>
 <svg style="left:1895.5px;top:18.2px" width="14" height="14" viewBox="0 0 14 14" fill="none" stroke="#ccc" stroke-width="1.5"><path d="M.8.8l12.4 12.4M13.2.8.8 13.2"/></svg>
 <div id="out">
<div>[cmake] </div>
<div>[cmake]     HW-Components/config.cmake</div>
<div>[cmake] </div>
<div>[cmake] </div>
<div>[cmake] CMake Error at CMakeLists.txt:83 (search_incs_recurse):</div>
<div>[cmake]   Unknown CMake command "search_incs_recurse".</div>
<div>[cmake] </div>
<div>[cmake] </div>
<div>[cmake] -- HAL file name: stm32f4xx_hal.h</div>
<div>[cmake] -- Configuring incomplete, errors occurred!</div>
<div>[proc] <span class="cj">命令</span><span class="cj" style="margin-left:-9.5px">“</span>D:\Softwares\CMake\bin\cmake.EXE -DCMAKE_BUILD_TYPE=Debug -DCMAKE_EXPORT_COMPILE_COMMANDS=ON -DCMAKE_TOOLCHAIN_FILE=D:/RoboMaster/RMCode/git_demo/</div>
<div>cmake/gcc-arm-none-eabi.cmake -SD:/RoboMaster/RMCode/git_demo -BD:/RoboMaster/RMCode/git_demo/build/Debug -G Ninja<span class="cj" style="margin-right:-7.6px">”</span><span class="cj">已退出，代码为</span> 1</div>
 </div>
 <div class="abs" style="left:1917px;top:53px;width:1px;height:373px;background:#3a3a3a"></div>
 <div class="abs" style="left:1918px;top:409px;width:19px;height:2px;background:#8a8a8a"></div>
 <!-- IME widget -->
 <div class="abs" style="left:1693px;top:336px;width:98px;height:48px;border-radius:24px;background:#3a7d44"></div>
 <div class="abs" style="left:1694.4px;top:337.2px;width:95.3px;height:37.6px;border-radius:18.8px;background:#fff"></div>
 <div class="abs" id="ime1" style="left:1699.8px;top:341.2px;line-height:36px;font-size:24.5px;color:#3a7d44;white-space:pre">中</div>
 <div class="abs" style="left:1731px;top:345px;width:10px;height:10px;border:2.6px solid #3a7d44;border-radius:50%"></div>
 <div class="abs" id="ime2" style="left:1744.5px;top:332.8px;line-height:40px;font:bold 37px/40px 'Liberation Serif',serif;color:#3a7d44">,</div>
 <svg style="left:1755.5px;top:345.6px" width="28" height="23.2" viewBox="0 0 28 23.2"><path d="M9 0Q14 4.6 19 0l9 7-4 5.6-3-2V23.2H7V10.6l-3 2L0 7z" fill="#3a7d44"/></svg>
 <div class="abs" style="left:0;top:50.5px;width:1917px;height:6px;background:linear-gradient(rgba(0,0,0,.5),rgba(0,0,0,0))"></div>
</div>

<!-- ===== STATUS BAR ===== -->
<div id="status">
 <div class="abs" style="left:0;top:0;width:51px;height:32px;background:#16825d"></div>
 <svg style="left:18px;top:7px" width="15" height="19" viewBox="0 0 15 19" fill="none" stroke="#fff" stroke-width="1.5"><path d="M1.4 5.7l6 5.3-6 6.7M14 1 8.7 7l5.3 5.4"/></svg>
 <svg style="left:62px;top:6px" width="16" height="21" viewBox="0 0 16 21" fill="none" stroke="#fff" stroke-width="1.6"><circle cx="4" cy="3.5" r="2.5"/><circle cx="4" cy="17.5" r="2.5"/><circle cx="12.5" cy="6.5" r="2.5"/><path d="M4 6v9M12.5 9q0 3.5-4.5 3.8-4 .4-4 2.2"/></svg>
 <span class="si" id="s1" style="left:86.6px">main</span>
 <svg style="left:133.5px;top:7px" width="23" height="19" viewBox="0 0 19 16" fill="none" stroke="#fff" stroke-width="1.35"><path d="M3.2 8A6.3 6.3 0 0 1 14.96 4.85M15.8 8A6.3 6.3 0 0 1 4.04 11.15M.6 10.3 3.2 7.5l2.6 2.8M13.2 5.7l2.6 2.8 2.6-2.8"/></svg>
 <svg style="left:177px;top:6.5px" width="20" height="20" viewBox="0 0 20 20" fill="none" stroke="#fff" stroke-width="1.6"><circle cx="10" cy="10" r="9"/><path d="M6 6l8 8M14 6l-8 8"/></svg>
 <span class="si" id="s2" style="left:201.5px">3</span>
 <svg style="left:217px;top:6.5px" width="21" height="19" viewBox="0 0 21 19" fill="none" stroke="#fff" stroke-width="1.6" stroke-linejoin="round"><path d="M10.5 1.2 19.8 18H1.2z"/><path d="M10.5 7v6M10.5 14.5v2"/></svg>
 <span class="si" id="s3" style="left:242px">0</span>
 <svg style="left:278px;top:6.5px" width="20" height="20" viewBox="0 0 20 20" fill="none" stroke="#fff" stroke-width="1.5"><circle cx="10" cy="7" r="1.8"/><path d="M10 9 5 19.5M10 9l5 10.5M7 15.5h6M6.5 3.5a5 5 0 0 0 0 7M13.5 3.5a5 5 0 0 1 0 7M3.8 1a8.5 8.5 0 0 0 0 12M16.2 1a8.5 8.5 0 0 1 0 12"/></svg>
 <span class="si" id="s4" style="left:301.6px">0</span>
 <svg style="left:337px;top:6.5px" width="20" height="20" viewBox="0 0 20 20" fill="none" stroke="#fff" stroke-width="1.5" stroke-linejoin="round"><path d="M7.4 3.7 8.4 3.4 8.6 0.9 11.4 0.9 11.6 3.4 12.6 3.7 13.5 4.2 15.5 2.6 17.4 4.5 15.8 6.5 16.3 7.4 16.6 8.4 19.1 8.6 19.1 11.4 16.6 11.6 16.3 12.6 15.8 13.5 17.4 15.5 15.5 17.4 13.5 15.8 12.6 16.3 11.6 16.6 11.4 19.1 8.6 19.1 8.4 16.6 7.4 16.3 6.5 15.8 4.5 17.4 2.6 15.5 4.2 13.5 3.7 12.6 3.4 11.6 0.9 11.4 0.9 8.6 3.4 8.4 3.7 7.4 4.2 6.5 2.6 4.5 4.5 2.6 6.5 4.2z"/><circle cx="10" cy="10" r="2.8"/></svg>
 <span class="si" id="s5" style="left:361.8px">生成</span>
 <svg style="left:423px;top:6px" width="21" height="21" viewBox="0 0 21 21" fill="none" stroke="#fff" stroke-width="1.5"><ellipse cx="10.5" cy="12" rx="5" ry="6.5"/><path d="M6.2 8.5q4.3-3 8.6 0M7.5 6.5 5 3.5M13.5 6.5 16 3.5M5.5 12H1M15.5 12H20M6 15.5 2.5 19M15 15.5l3.5 3.5"/></svg>
 <svg style="left:471px;top:7px" width="15" height="19" viewBox="0 0 15 19" fill="none" stroke="#fff" stroke-width="1.6" stroke-linejoin="round"><path d="M1 1v17l13-8.5z"/></svg>
 <span class="si" id="s6" style="left:512.2px">-- NORMAL --</span>
 <span class="si" id="s7" style="left:1993.8px">行 1，列 1</span>
 <span class="si" id="s8" style="left:2100.6px">空格: 2</span>
 <span class="si" id="s9" style="left:2179.4px">UTF-8</span>
 <span class="si" id="s10" style="left:2251px">LF</span>
 <span class="si" id="s11" style="left:2291.9px">CMake</span>
 <span class="si" id="s12" style="left:2370.7px">Indents: 0</span>
 <svg style="left:2471px;top:6px" width="23" height="21" viewBox="0 0 23 21" fill="none" stroke="#fff" stroke-width="1.7"><path d="M3 9V6q0-4 4.5-4 3.5 0 4 3 .5-3 4-3Q20 2 20 6v3"/><path d="M3 9q-2 1-2 3v3q4 5 10.5 5T22 15v-3q0-2-2-3M11.5 5v5"/><path d="M8.5 12.5v3M14.5 12.5v3" stroke-width="2.2"/></svg>
 <svg style="left:2520px;top:4px" width="21" height="24" viewBox="0 0 21 24" fill="none" stroke="#fff" stroke-width="1.6"><path d="M2 18.5h16M3.5 18V10a6.5 6.5 0 0 1 8-6.3M16.5 12v6M8 19q0 3 2.5 3T13 19"/><circle cx="16" cy="5" r="3.5" fill="#fff" stroke="none"/></svg>
</div>

<!-- ===== below window ===== -->
<div id="below">
 <div class="abs" style="left:445px;top:7.5px;width:52px;height:12px;border-radius:5px;background:#eef1f4"></div>
 <div class="abs" style="left:575px;top:7px;width:60px;height:12px;border-radius:6px;background:#f4d6d9"></div>
</div>

</body></html>
